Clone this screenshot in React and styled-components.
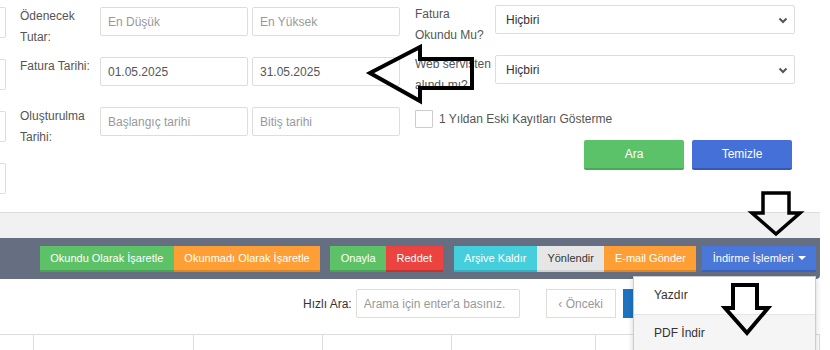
import React from "react";
import styled, { createGlobalStyle } from "styled-components";

const GlobalStyle = createGlobalStyle`
  body {
    margin: 0;
    background: #fff;
    font-family: "Liberation Sans", Arial, sans-serif;
    font-size: 12px;
    color: #555;
  }
`;

function App() {
  return (
    <Page>
      <GlobalStyle />
      <FilterPanel>
        <StubColumn>
          <StubInput />
          <StubInput />
          <StubInput />
          <StubInput />
        </StubColumn>
        <LeftGrid>
          <Label>Ödenecek Tutar:</Label>
          <Input placeholder="En Düşük" />
          <Input placeholder="En Yüksek" />
          <Label>Fatura Tarihi:</Label>
          <Input defaultValue="01.05.2025" />
          <Input defaultValue="31.05.2025" />
          <Label>Oluşturulma Tarihi:</Label>
          <Input placeholder="Başlangıç tarihi" />
          <Input placeholder="Bitiş tarihi" />
        </LeftGrid>
        <RightBlock>
          <RightGrid>
            <Label>Fatura Okundu Mu?</Label>
            <Select>
              <span>Hiçbiri</span>
              <Chevron />
            </Select>
            <Label>Web servisten alındı mı?</Label>
            <Select>
              <span>Hiçbiri</span>
              <Chevron />
            </Select>
          </RightGrid>
          <CheckRow>
            <CheckBox />
            <span>1 Yıldan Eski Kayıtları Gösterme</span>
          </CheckRow>
          <ActionRow>
            <ActionButton $bg="#5cc26a" $edge="#4aa857">Ara</ActionButton>
            <ActionButton $bg="#4470d8" $edge="#3459b8">Temizle</ActionButton>
          </ActionRow>
        </RightBlock>
      </FilterPanel>

      <Main>
        <Strip />
        <Toolbar>
          <Group>
            <ToolButton $bg="#5dc267" $edge="#48a653">Okundu Olarak İşaretle</ToolButton>
            <ToolButton $bg="#fd9f35" $edge="#e08722">Okunmadı Olarak İşaretle</ToolButton>
          </Group>
          <Group $gap="10px">
            <ToolButton $bg="#5dc267" $edge="#48a653">Onayla</ToolButton>
            <ToolButton $bg="#ea4340" $edge="#c9302c">Reddet</ToolButton>
          </Group>
          <Group $gap="11px">
            <ToolButton $bg="#45cedb" $edge="#2fb3c0">Arşive Kaldır</ToolButton>
            <ToolButton $bg="#e6e6e6" $edge="#d0d0d0" $fg="#333">Yönlendir</ToolButton>
            <ToolButton $bg="#fd9f35" $edge="#e08722">E-mail Gönder</ToolButton>
          </Group>
          <Group $gap="6px">
            <ToolButton $bg="#4a78d9" $edge="#3862c0">
              İndirme İşlemleri <Caret />
            </ToolButton>
            <Dropdown>
              <MenuItem>Yazdır</MenuItem>
              <MenuItem $active>PDF İndir</MenuItem>
            </Dropdown>
          </Group>
        </Toolbar>

        <SearchRow>
          <SearchLabel>Hızlı Ara:</SearchLabel>
          <SearchInput placeholder="Arama için enter'a basınız." />
          <Pager>
            <PageButton>‹ Önceki</PageButton>
            <PageButton $current>1</PageButton>
          </Pager>
        </SearchRow>

        <TableHead>
          {[34, 160, 129, 129, 144, 120, 104].map((w, i) => (
            <HeadCell key={i} style={{ width: w }} />
          ))}
        </TableHead>
      </Main>

      <Annotations width="830" height="350" viewBox="0 0 830 350">
        <polygon
          points="370,73 420,47 420,59 472,59 472,88 420,88 420,101"
          fill="none"
          stroke="#000"
          strokeWidth="4"
          strokeLinejoin="miter"
        />
        <polygon
          points="763,193 789,193 789,213 800,213 776,234 752,213 763,213"
          fill="none"
          stroke="#000"
          strokeWidth="3.5"
        />
        <polygon
          points="733,285 757,285 757,308 768,308 747,333 725,308 733,308"
          fill="none"
          stroke="#000"
          strokeWidth="4"
        />
      </Annotations>
    </Page>
  );
}

function Chevron() {
  return (
    <svg width="10" height="10" viewBox="0 0 10 10">
      <path d="M1.5 3.5 L5 7 L8.5 3.5" fill="none" stroke="#555" strokeWidth="2" />
    </svg>
  );
}

const Page = styled.div`
  position: relative;
  width: 830px;
  height: 350px;
  overflow: hidden;
`;

const FilterPanel = styled.div`
  display: flex;
  align-items: flex-start;
  height: 207px;
  padding-top: 5px;
  border-bottom: 1px solid #ddd;
  width: 820px;
`;

const StubColumn = styled.div`
  display: flex;
  flex-direction: column;
  gap: 21px;
  margin-top: 2px;
`;

const StubInput = styled.div`
  width: 5px;
  height: 29px;
  border: 1px solid #ddd;
  border-left: none;
  border-radius: 0 2px 2px 0;
`;

const LeftGrid = styled.div`
  display: grid;
  grid-template-columns: 76px 148px 148px;
  grid-auto-rows: 29px;
  column-gap: 4px;
  row-gap: 21px;
  margin-left: 14px;
  margin-top: 2px;
`;

const Label = styled.div`
  font-size: 12px;
  line-height: 21px;
  color: #555;
  margin-top: -1px;
`;

const Input = styled.input`
  box-sizing: border-box;
  height: 29px;
  width: 100%;
  border: 1px solid #ddd;
  border-radius: 2px;
  padding: 0 7px;
  font-family: inherit;
  font-size: 12px;
  color: #555;
  outline: none;
  &::placeholder {
    color: #999;
  }
`;

const RightBlock = styled.div`
  display: flex;
  flex-direction: column;
  margin-left: 15px;
`;

const RightGrid = styled.div`
  display: grid;
  grid-template-columns: 80px 300px;
  grid-auto-rows: 29px;
  row-gap: 21px;
`;

const Select = styled.div`
  box-sizing: border-box;
  height: 29px;
  border: 1px solid #ddd;
  border-radius: 2px;
  display: flex;
  align-items: center;
  justify-content: space-between;
  padding: 0 6px 0 10px;
  font-size: 12px;
  color: #333;
`;

const CheckRow = styled.div`
  display: flex;
  align-items: center;
  gap: 6px;
  margin-top: 26px;
  font-size: 12px;
  color: #555;
`;

const CheckBox = styled.span`
  box-sizing: border-box;
  width: 18px;
  height: 18px;
  border: 1px solid #ccc;
  border-radius: 1px;
  background: #fff;
`;

const ActionRow = styled.div`
  display: flex;
  justify-content: flex-end;
  gap: 8px;
  margin-top: 12px;
  padding-right: 3px;
`;

const ActionButton = styled.button`
  box-sizing: border-box;
  width: 100px;
  height: 30px;
  border: none;
  border-bottom: 2px solid ${(p) => p.$edge};
  border-radius: 2px;
  background: ${(p) => p.$bg};
  color: #fff;
  font-family: inherit;
  font-size: 12px;
`;

const Main = styled.div`
  width: 820px;
`;

const Strip = styled.div`
  height: 25px;
  background: #f1f1f1;
`;

const Toolbar = styled.div`
  display: flex;
  align-items: center;
  justify-content: flex-end;
  height: 41px;
  padding-right: 4px;
  background: #666e82;
  border-radius: 0 0 4px 0;
`;

const Group = styled.div`
  position: relative;
  display: flex;
  margin-left: ${(p) => p.$gap || "0"};
`;

const ToolButton = styled.button`
  box-sizing: border-box;
  height: 26px;
  padding: 0 10.5px;
  border: none;
  border-bottom: 2px solid ${(p) => p.$edge};
  background: ${(p) => p.$bg};
  color: ${(p) => p.$fg || "#fff"};
  font-family: inherit;
  font-size: 11px;
  white-space: nowrap;
  display: flex;
  align-items: center;
`;

const Caret = styled.span`
  display: inline-block;
  margin-left: 4px;
  width: 0;
  height: 0;
  border-left: 4px solid transparent;
  border-right: 4px solid transparent;
  border-top: 4px solid #fff;
`;

const Dropdown = styled.div`
  position: absolute;
  top: calc(100% + 4px);
  right: 0;
  width: 183px;
  box-sizing: border-box;
  background: #fff;
  border: 1px solid #ccc;
  box-shadow: 0 2px 6px rgba(0, 0, 0, 0.18);
  z-index: 2;
`;

const MenuItem = styled.div`
  height: 37px;
  line-height: 37px;
  padding-left: 20px;
  font-size: 12px;
  color: #333;
  background: ${(p) => (p.$active ? "#f5f5f5" : "#fff")};
  & + & {
    border-top: 1px solid #e5e5e5;
  }
`;

const SearchRow = styled.div`
  display: flex;
  align-items: center;
  padding: 10px 0 0 303px;
`;

const SearchLabel = styled.span`
  font-size: 12px;
  color: #333;
`;

const SearchInput = styled(Input)`
  width: 164px;
  margin-left: 4px;
`;

const Pager = styled.div`
  display: flex;
  gap: 7px;
  margin-left: 26px;
`;

const PageButton = styled.div`
  box-sizing: border-box;
  height: 29px;
  min-width: ${(p) => (p.$current ? "40px" : "70px")};
  display: flex;
  align-items: center;
  justify-content: center;
  border: 1px solid ${(p) => (p.$current ? "#1c74c0" : "#ddd")};
  background: ${(p) => (p.$current ? "#1c74c0" : "#fff")};
  color: ${(p) => (p.$current ? "#fff" : "#999")};
  font-size: 12px;
`;

const TableHead = styled.div`
  display: flex;
  margin-top: 16px;
  height: 30px;
  border-top: 1px solid #ddd;
`;

const HeadCell = styled.div`
  box-sizing: border-box;
  border-right: 1px solid #ddd;
`;

const Annotations = styled.svg`
  position: absolute;
  left: 0;
  top: 0;
  pointer-events: none;
  z-index: 5;
`;

export default App;
